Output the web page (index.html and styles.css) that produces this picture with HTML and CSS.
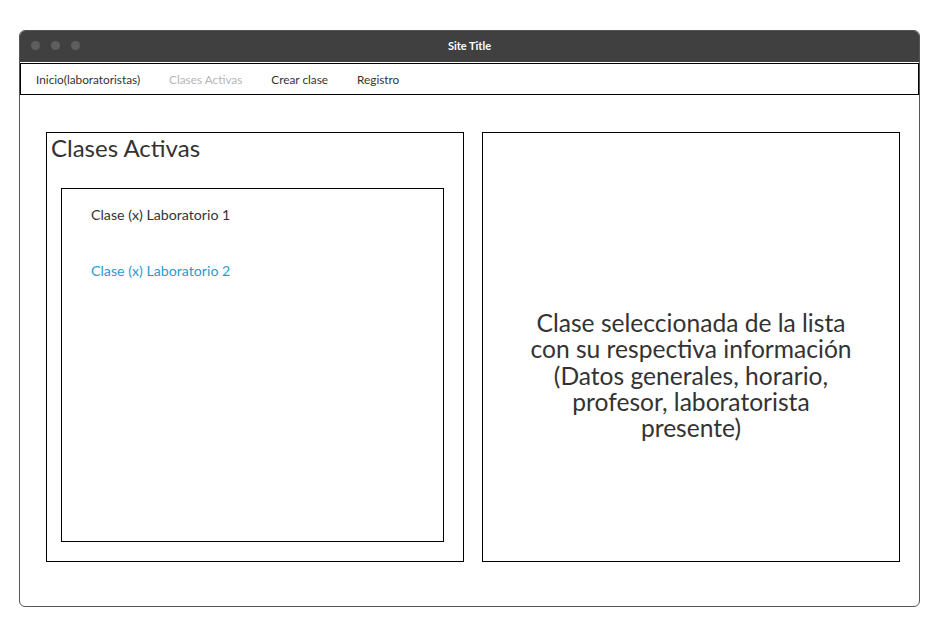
FILE: index.html
```html
<!DOCTYPE html>
<html lang="es">
<head>
<meta charset="utf-8">
<title>Site Title</title>
<link rel="stylesheet" href="styles.css">
</head>
<body>
<div class="window">
  <div class="titlebar">
    <div class="dots"><span class="dot"></span><span class="dot"></span><span class="dot"></span></div>
    <div class="site-title">Site Title</div>
  </div>
  <nav class="nav">
    <a class="nav-item">Inicio(laboratoristas)</a>
    <a class="nav-item nav-active">Clases Activas</a>
    <a class="nav-item">Crear clase</a>
    <a class="nav-item">Registro</a>
  </nav>
  <main class="content">
    <section class="panel panel-left">
      <h1 class="panel-title">Clases Activas</h1>
      <div class="list-box">
        <div class="list-item">Clase (x) Laboratorio 1</div>
        <div class="list-item list-item-link">Clase (x) Laboratorio 2</div>
      </div>
    </section>
    <section class="panel panel-right">
      <p class="detail-text">Clase seleccionada de la lista<br>con su respectiva información<br>(Datos generales, horario,<br>profesor, laboratorista<br>presente)</p>
    </section>
  </main>
</div>
</body>
</html>
```
FILE: styles.css
```css
html, body {
  margin: 0;
  padding: 0;
  background: #ffffff;
}
body {
  font-family: "Lato", "Open Sans", sans-serif;
  color: #333333;
}
.window {
  box-sizing: border-box;
  margin: 30px 0 0 19px;
  width: 901px;
  height: 577px;
  border: 1px solid #555555;
  border-radius: 6px;
  overflow: hidden;
  background: #ffffff;
}
.titlebar {
  position: relative;
  height: 31px;
  background: #404040;
  display: flex;
  align-items: center;
}
.dots {
  display: flex;
  gap: 11px;
  padding-left: 11px;
  margin-top: -3px;
}
.dot {
  width: 9px;
  height: 9px;
  border-radius: 50%;
  background: #5e5e5e;
}
.site-title {
  position: absolute;
  left: 0;
  right: 0;
  top: 0;
  line-height: 29px;
  text-align: center;
  color: #ffffff;
  font-size: 11px;
  font-weight: 700;
}
.nav {
  box-sizing: border-box;
  margin: 1px 0 0 0;
  height: 32px;
  border: 1px solid #000000;
  display: flex;
  align-items: center;
  padding-left: 15px;
  gap: 29px;
}
.nav-item {
  font-size: 11.8px;
  color: #333333;
}
.nav-active {
  color: #b5b5b5;
}
.content {
  display: grid;
  grid-template-columns: 418px 418px;
  column-gap: 18px;
  padding: 37px 0 0 26px;
}
.panel {
  box-sizing: border-box;
  height: 430px;
  border: 1px solid #000000;
}
.panel-left {
  padding: 0 19px 0 14px;
  display: flex;
  flex-direction: column;
}
.panel-title {
  margin: 0 0 0 -14px;
  padding: 0 0 0 4px;
  font-size: 24px;
  font-weight: 400;
  line-height: 30px;
  color: #333333;
}
.list-box {
  box-sizing: border-box;
  margin-top: 25px;
  height: 354px;
  border: 1px solid #000000;
  padding: 16px 0 0 29px;
}
.list-item {
  font-size: 14.2px;
  line-height: 20px;
  color: #333333;
  margin-bottom: 36px;
}
.list-item-link {
  color: #2b9ad0;
}
.panel-right {
  display: flex;
  justify-content: center;
  padding-top: 177px;
}
.detail-text {
  margin: 0;
  text-align: center;
  font-size: 24.6px;
  line-height: 26.3px;
  color: #333333;
}
```
